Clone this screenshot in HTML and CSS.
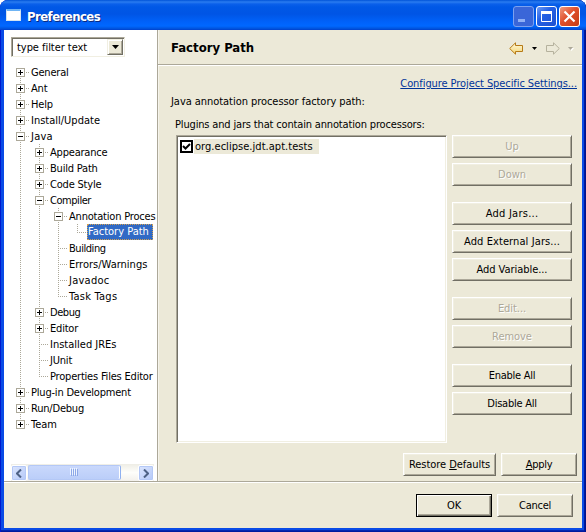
FILE: index.html
```html
<!DOCTYPE html>
<html lang="en">
<head>
<meta charset="utf-8">
<title>Preferences</title>
<link rel="stylesheet" href="styles.css">
</head>
<body>
<div class="window">
  <header class="titlebar">
    <span class="app-icon"></span>
    <h1 class="title">Preferences</h1>
    <div class="controls">
      <span class="ctl ctl-min"><svg width="21" height="21"><path d="M5 13h7v3H5z" fill="#8fb0f5"/></svg></span>
      <span class="ctl ctl-max"><svg width="21" height="21"><path d="M5.5 5.5h10v10h-10z" fill="none" stroke="#fff"/><path d="M5 5h11v3H5z" fill="#fff"/></svg></span>
      <span class="ctl ctl-close"><svg width="21" height="21"><path d="M5.5 5.5l10 10M15.500 5.500l-10 10" stroke="#fff" stroke-width="2.200"/></svg></span>
    </div>
  </header>
  <div class="client">
    <div class="main">
      <aside class="sidebar">
        <div class="filter"><span class="filter-text">type filter text</span><span class="drop"><svg width="7" height="4"><path d="M0 0h7L3.500 4z"/></svg></span></div>
        <div class="tree">
          <ul class="root">
            <li><div class="row"><i class="box plus"></i><span>General</span></div></li>
            <li><div class="row"><i class="box plus"></i><span>Ant</span></div></li>
            <li><div class="row"><i class="box plus"></i><span>Help</span></div></li>
            <li><div class="row"><i class="box plus"></i><span class="wide">Install/Update</span></div></li>
            <li><div class="row"><i class="box"></i><span class="wider">Java</span></div>
              <ul>
                <li><div class="row"><i class="box plus"></i><span>Appearance</span></div></li>
                <li><div class="row"><i class="box plus"></i><span>Build Path</span></div></li>
                <li><div class="row"><i class="box plus"></i><span>Code Style</span></div></li>
                <li><div class="row"><i class="box"></i><span class="tight">Compiler</span></div>
                  <ul>
                    <li><div class="row"><i class="box"></i><span>Annotation Proces</span></div>
                      <ul>
                        <li><div class="row"><span class="selected wide">Factory Path</span></div></li>
                      </ul>
                    </li>
                    <li><div class="row"><span class="tight">Building</span></div></li>
                    <li><div class="row"><span class="wide">Errors/Warnings</span></div></li>
                    <li><div class="row"><span class="wider">Javadoc</span></div></li>
                    <li><div class="row"><span class="wider">Task Tags</span></div></li>
                  </ul>
                </li>
                <li><div class="row"><i class="box plus"></i><span class="tight">Debug</span></div></li>
                <li><div class="row"><i class="box plus"></i><span>Editor</span></div></li>
                <li><div class="row"><span class="wide">Installed JREs</span></div></li>
                <li><div class="row"><span>JUnit</span></div></li>
                <li><div class="row"><span>Properties Files Editor</span></div></li>
              </ul>
            </li>
            <li><div class="row"><i class="box plus"></i><span>Plug-in Development</span></div></li>
            <li><div class="row"><i class="box plus"></i><span>Run/Debug</span></div></li>
            <li><div class="row"><i class="box plus"></i><span class="wide">Team</span></div></li>
          </ul>
        </div>
        <div class="scrollbar">
          <span class="sb-btn"><svg width="6" height="9"><path d="M5 .5l-4 4 4 4" fill="none" stroke="#4d6185" stroke-width="2"/></svg></span>
          <span class="thumb"><i></i><i></i><i></i><i></i></span>
          <span class="sb-btn sb-right"><svg width="6" height="9"><path d="M1 .5l4 4-4 4" fill="none" stroke="#4d6185" stroke-width="2"/></svg></span>
        </div>
      </aside>
      <section class="page">
        <div class="page-head">
          <h2>Factory Path</h2>
          <div class="nav">
            <svg width="66" height="13">
              <defs><linearGradient id="g" x2="0" y2="1"><stop offset="0" stop-color="#fffbe0"/><stop offset="1" stop-color="#f4d470"/></linearGradient></defs>
              <path d="M.7 6.500L6.500 .8V3.500h7v6h-7v2.700z" fill="url(#g)" stroke="#b67a16"/>
              <path d="M23 5h5L25.500 8z"/>
              <path d="M50.300 6.500L44.500 .8V3.500h-7v6h7v2.700z" fill="none" stroke="#b5b19d"/>
              <path d="M60 6h5l-2.500 3z" fill="#fff"/><path d="M59 5h5l-2.500 3z" fill="#aca899"/>
            </svg>
          </div>
        </div>
        <div class="page-body">
          <a class="link">Configure Project Specific Settings...</a>
          <p class="label l1">Java annotation processor factory path:</p>
          <p class="label l2">Plugins and jars that contain annotation processors:</p>
          <div class="columns">
            <div class="list"><div class="item"><span class="check"><svg width="9" height="9"><path d="M1 4l2.500 2.500L8 2" fill="none" stroke="#000" stroke-width="2"/></svg></span><span class="item-text">org.eclipse.jdt.apt.tests</span></div></div>
            <div class="buttons">
              <span class="btn off">Up</span>
              <span class="btn off">Down</span>
              <span class="btn gap wider">Add Jars...</span>
              <span class="btn loose">Add External Jars...</span>
              <span class="btn">Add Variable...</span>
              <span class="btn off gap">Edit...</span>
              <span class="btn off">Remove</span>
              <span class="btn gap narrow">Enable All</span>
              <span class="btn narrow">Disable All</span>
            </div>
          </div>
          <div class="page-actions">
            <span class="btn restore">Restore <u>D</u>efaults</span>
            <span class="btn apply narrow"><u>A</u>pply</span>
          </div>
        </div>
      </section>
    </div>
    <footer class="footer">
      <span class="btn default">OK</span>
      <span class="btn apply narrow">Cancel</span>
    </footer>
  </div>
</div>
</body>
</html>
```

FILE: styles.css
```css
* { box-sizing: border-box; }
html, body { margin: 0; height: 100%; background: #fff; overflow: hidden; }
body { font: 11px/13px "DejaVu Sans Condensed", Tahoma, sans-serif; letter-spacing: -0.2px; color: #000; }
h1, h2, p, ul { margin: 0; padding: 0; }
ul { list-style: none; }
svg { display: block; }

.window { width: 586px; height: 532px; display: flex; flex-direction: column; padding: 0 4px 4px; border-radius: 8px 8px 0 0; overflow: hidden;
  background: #0a4be6; box-shadow: inset 1px 0 #0019cf, inset -1px 0 #00138c, inset -2px -1px #001a9e, inset 0 -2px #0526b0; }
.titlebar { height: 30px; flex: none; margin: 0 -4px; padding: 0 6px; display: flex; align-items: center;
  background: linear-gradient(#0053d8 0, #2a7cf0 2px, #0a60ea 4px, #0058e6 7px, #0055e5 14px, #0062fa 22px, #0068ff 26px, #0050d8 29px, #003dcc 30px); }
.app-icon { width: 15px; height: 12px; background: #fff; border: 1px solid #d4e4f0; border-top: 2px solid #6fb4f4; }
.title { flex: 1; margin-left: 6px; padding-top: 4px; font-size: 13px; line-height: 16px; letter-spacing: -0.55px; color: #fff; text-shadow: 1px 1px #0a2a80; }
.controls { display: flex; gap: 2px; padding-top: 3px; }
.ctl { width: 21px; height: 21px; border-radius: 3px; border: 1px solid #fff; background: linear-gradient(135deg, #6d9bf5, #2460e4 40%, #1c50d0); }
.ctl svg { margin: -1px; }
.ctl-min { border-color: #7ba1f0; background: #3a66d8; }
.ctl-close { background: linear-gradient(135deg, #f09a80, #e0502c 45%, #c43c14); }

.client { flex: 1; display: flex; flex-direction: column; background: #ece9d8; min-height: 0; }
.main { height: 451px; display: flex; }
.sidebar { width: 153px; background: #fff; display: flex; flex-direction: column; padding: 7px 0 0 7px; }
.filter { width: 114px; height: 20px; display: flex; border: 1px solid; border-color: #aca899 #f1efe2 #f1efe2 #aca899; box-shadow: inset 1px 1px #716f64; padding: 1px; background: #fff; }
.filter-text { flex: 1; padding: 2px 0 0 4px; letter-spacing: -0.05px; }
.drop { width: 16px; display: flex; align-items: center; justify-content: center; background: #ece9d8; border: 1px solid; border-color: #f1efe2 #716f64 #716f64 #f1efe2; box-shadow: inset 1px 1px #fff, inset -1px -1px #aca899; }

.tree { height: 407px; width: 144px; padding: 7px 0 0 4px; }
.tree ul ul { margin-left: 19px; }
.tree li { position: relative; }
.tree li::before { content: ""; position: absolute; left: 5px; top: 0; bottom: 0; width: 1px; background: repeating-linear-gradient(#aca899 0 1px, transparent 1px 2px); }
.tree li:last-child::before { bottom: auto; height: 9px; }
.root > li:first-child::before { top: 8px; }
.row { height: 16px; display: flex; align-items: center; white-space: nowrap; position: relative; padding-left: 15px; }
.row::before { content: ""; position: absolute; left: 5px; top: 8px; width: 10px; height: 1px; background: repeating-linear-gradient(90deg, #aca899 0 1px, transparent 1px 2px); }
.row span { padding: 0 1px; line-height: 15px; }
.tight { letter-spacing: -0.45px; }
.wide { letter-spacing: 0; }
.wider { letter-spacing: 0.25px; }
.box { position: absolute; left: 1px; top: 4px; width: 9px; height: 9px; border: 1px solid #aca899; background: linear-gradient(#000, #000) 1px 3px / 5px 1px no-repeat, #fff; }
.box.plus { background: linear-gradient(#000, #000) 1px 3px / 5px 1px no-repeat, linear-gradient(#000, #000) 3px 1px / 1px 5px no-repeat, #fff; }
.row .selected { height: 16px; width: 66px; flex: none; line-height: 16px; background: #316ac5; color: #fff; outline: 1px dotted #d4a050; outline-offset: -1px; }

.scrollbar { height: 17px; width: 143px; display: flex; background: linear-gradient(#eeede5, #fefefb 50%, #f3f1ec); padding-top: 1px; }
.sb-btn { width: 16px; height: 16px; border-radius: 2px; border: 1px solid #fff; box-shadow: inset 0 0 0 1px #b4c8f6; background: linear-gradient(135deg, #dce6fe, #b4c8f8); display: flex; align-items: center; justify-content: center; }
.thumb { width: 93px; height: 15px; margin-left: 1px; border-radius: 2px; border: 1px solid #b4c8f6; border-right-color: #8fb0f0; box-shadow: inset -1px 0 #fff; background: linear-gradient(#c9d8fc, #bbcef9); display: flex; gap: 1px; align-items: center; justify-content: center; }
.thumb i { width: 1px; height: 7px; background: #8ca8e8; box-shadow: -1px -1px #eef4fe; }
.sb-right { margin-left: auto; }

.page { flex: 1; min-width: 0; border-left: 1px solid #aca899; box-shadow: inset 1px 0 #f6f4ec; }
.page-head { height: 35px; display: flex; align-items: center; justify-content: space-between; padding: 0 7px 0 13px; border-bottom: 1px solid #aca899; box-shadow: 0 1px #fff; }
h2 { padding-top: 2px; font-size: 13px; line-height: 16px; letter-spacing: 0; }
.nav { padding-top: 2px; }
.page-body { padding: 12px 10px 0 13px; display: flex; flex-direction: column; }
.link { align-self: flex-end; margin-right: -5px; color: #003399; text-decoration: underline; letter-spacing: -0.08px; }
.label { letter-spacing: -0.05px; }
.l1 { margin-top: 5px; }
.l2 { margin: 10px 0 0 5px; margin-left: 4px; letter-spacing: -0.16px; }
.columns { display: flex; gap: 5px; margin: 4px 0 0 5px; }
.list { width: 271px; flex: none; height: 308px; background: #fff; border: 1px solid; border-color: #aca899 #fff #fff #aca899; box-shadow: inset 1px 1px #716f64, inset -1px -1px #f1efe2; padding: 3px 0 0 3px; }
.item { display: flex; align-items: center; gap: 1px; }
.check { width: 13px; height: 13px; border: 2px solid #000; background: #fff; }
.item-text { width: 125px; height: 15px; padding: 1px 0 0 1px; background: #ece9d8; letter-spacing: 0.04px; }
.buttons { width: 120px; display: flex; flex-direction: column; gap: 5px; }
.btn { flex: none; height: 23px; display: flex; align-items: center; justify-content: center; white-space: pre; letter-spacing: -0.05px; border: 1px solid; border-color: #fff #716f64 #716f64 #fff; box-shadow: inset 1px 1px #f1efe2, inset -1px -1px #aca899; }
.btn.wider { letter-spacing: 0.25px; }
.btn.loose { letter-spacing: 0.1px; }
.btn.narrow { letter-spacing: -0.25px; }
.gap { margin-top: 11px; }
.off { color: #aca899; text-shadow: 1px 1px #fff; }
.page-actions { display: flex; justify-content: flex-end; gap: 5px; margin: 10px -5px 0 0; }
.restore { width: 93px; }
.apply { width: 76px; }
.footer { flex: 1; display: flex; justify-content: flex-end; gap: 5px; padding: 12px 9px 0 0; border-top: 1px solid #aca899; box-shadow: inset 0 1px #fff; }
.default { width: 76px; border-color: #000; box-shadow: inset 1px 1px #fff, inset -1px -1px #716f64, inset -2px -2px #aca899; }
```
